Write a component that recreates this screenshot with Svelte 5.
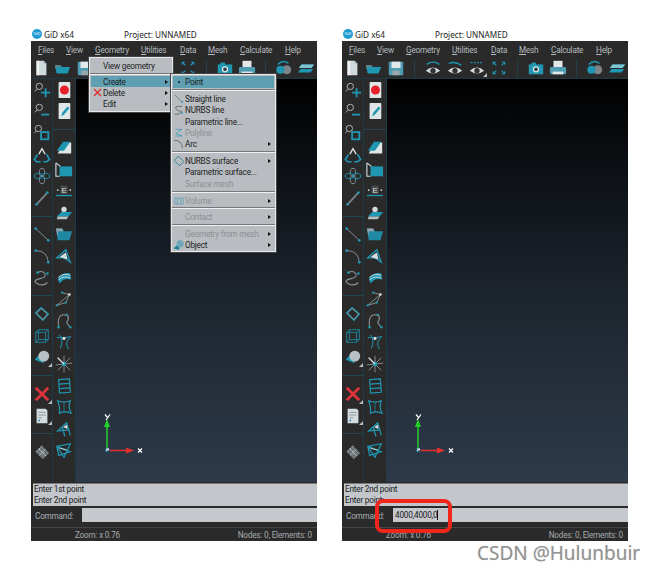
<script>
  const menus = ['Files', 'View', 'Geometry', 'Utilities', 'Data', 'Mesh', 'Calculate', 'Help'];

  const T = '#1f97b3';
  const G = '#8f989d';
  const W = '#d5dcdf';

  // inner svg for each icon, 20x20 box
  const icons = {
    doc: `<path d="M5 2h8l3 3v13H5z" fill="#cfdadd"/><path d="M5 2h3v16H5z" fill="#eef2f3"/><path d="M13 2l3 3h-3z" fill="#8fa5ab"/>`,
    folder: `<path d="M1 7h6l2 2h9l-3 7H3z" fill="${T}"/><path d="M1 7h6l1 2H3l-1 3z" fill="#6d8088"/>`,
    save: `<rect x="2" y="3" width="16" height="15" rx="1" fill="#4f9db2"/><rect x="5" y="3" width="10" height="7" fill="#e3e9eb"/><rect x="6" y="13" width="8" height="5" fill="#9aa8ad"/>`,
    eyeA: `<path d="M3 6Q10 1 17 6" fill="none" stroke="${T}" stroke-width="1.500"/><path d="M2 13Q10 6 18 13Q10 19 2 13z" fill="${W}"/><circle cx="10" cy="13" r="3" fill="#333"/>`,
    eyeB: `<path d="M3 5Q10 2 17 7" fill="none" stroke="${T}" stroke-width="1.500"/><path d="M2 13Q10 6 18 13Q10 19 2 13z" fill="${W}"/><circle cx="10" cy="13" r="3" fill="#333"/>`,
    eyeC: `<path d="M3 4h14" stroke="${T}" stroke-width="1.500" stroke-dasharray="2 1.500"/><path d="M2 13Q10 6 18 13Q10 19 2 13z" fill="${W}"/><circle cx="10" cy="13" r="3" fill="#333"/>`,
    fit: `<path d="M3 3h4L3 7zM17 3v4l-4-4zM3 17v-4l4 4zM17 17h-4l4-4z" fill="${T}"/><path d="M5 5l2 2M15 5l-2 2M5 15l2-2M15 15l-2-2" stroke="${T}" stroke-width="1.200"/>`,
    camera: `<rect x="2" y="6" width="16" height="11" fill="${T}"/><rect x="5" y="4" width="5" height="3" fill="${T}"/><circle cx="10" cy="11.500" r="3.500" fill="#dfe6e8"/><circle cx="10" cy="11.500" r="2" fill="#23424e"/>`,
    printer: `<rect x="5" y="2" width="10" height="8" fill="#e3e9eb"/><rect x="1" y="9" width="18" height="8" rx="1.500" fill="#4f9db2"/><rect x="4" y="14" width="12" height="3" fill="#dfe6e8"/>`,
    render: `<circle cx="13" cy="12" r="5" fill="#7d8489"/><circle cx="6" cy="12" r="4.500" fill="${T}"/><path d="M3 6Q9 0 15 5" fill="none" stroke="${T}" stroke-width="1.500"/>`,
    layers: `<path d="M5 6h14l-3 4H2zM4 11h14l-3 4H1z" fill="${T}"/><path d="M5 6h14l-3 4H2z" fill="#7fc4d3"/>`,
    zoomPlus: `<circle cx="7" cy="6" r="3.500" fill="none" stroke="#b9c1c5"/><path d="M4.500 9L2 11.500" stroke="#b9c1c5"/><path d="M14 8v10M9 13h10" stroke="${T}" stroke-width="2"/>`,
    zoomMinus: `<circle cx="7" cy="6" r="3.500" fill="none" stroke="#b9c1c5"/><path d="M4.500 9L2 11.500" stroke="#b9c1c5"/><path d="M9 14h9" stroke="${T}" stroke-width="2"/>`,
    zoomBox: `<circle cx="6" cy="5" r="3.500" fill="none" stroke="#b9c1c5"/><path d="M3.500 8L1.500 10" stroke="#b9c1c5"/><rect x="9" y="9" width="8" height="8" fill="none" stroke="${T}" stroke-width="2"/>`,
    recycle: `<path d="M6.500 9L10 3L13.500 9" fill="none" stroke="${W}" stroke-width="1.600"/><path d="M15 9L18.500 15L15 17.500H11.500" fill="none" stroke="${T}" stroke-width="1.800"/><path d="M8.500 17.500H4L1.500 15L5 9.500" fill="none" stroke="${T}" stroke-width="1.800"/>`,
    flower: `<g fill="none" stroke="${G}"><ellipse cx="10" cy="6" rx="3" ry="4.500"/><ellipse cx="10" cy="14" rx="3" ry="4.500"/></g><g fill="none" stroke="${T}"><ellipse cx="6" cy="10" rx="4.500" ry="3"/><ellipse cx="14" cy="10" rx="4.500" ry="3"/></g>`,
    segArrow: `<path d="M4 17L16 4" stroke="#7d8489" stroke-width="2"/><circle cx="4" cy="17" r="1.500" fill="${T}"/><circle cx="16" cy="4" r="1.500" fill="${T}"/>`,
    line: `<path d="M3 4L17 17" stroke="#8b9499"/><circle cx="3" cy="4" r="1.500" fill="${T}"/><circle cx="17" cy="17" r="1.500" fill="${T}"/>`,
    arc: `<path d="M3 4Q16 4 17 17" fill="none" stroke="#8b9499"/><circle cx="3" cy="4" r="1.500" fill="${T}"/><circle cx="17" cy="17" r="1.500" fill="${T}"/>`,
    curve: `<path d="M5 4Q10 1 13 5T7 11T6 17Q12 19 16 15" fill="none" stroke="#8b9499" stroke-width="1.200"/><circle cx="5" cy="4" r="1.500" fill="${T}"/><circle cx="16" cy="5" r="1.500" fill="${T}"/>`,
    quad: `<path d="M3 9L9 3L17 10L11 17z" fill="none" stroke="${T}" stroke-width="1.500"/><path d="M4 9L9 4L16 10L11 16z" fill="none" stroke="#8b9499"/>`,
    cube: `<path d="M3 6h11v11H3zM6 3h11v11H6zM3 6l3-3M14 6l3-3M14 17l3-3M3 17l3-3" fill="none" stroke="#1f7f98" stroke-width="1.100"/>`,
    sphere: `<path d="M2 13L10 3L12 17z" fill="${T}"/><circle cx="12" cy="9" r="6" fill="#b9c0c4"/>`,
    cross: `<path d="M3 3L17 17M17 3L3 17" stroke="#e0323a" stroke-width="3"/>`,
    sheet: `<path d="M4 2h10l2 2v14H4z" fill="#d5dcdf"/><path d="M6 6h8M6 9h8M6 12h4" stroke="#8c979c"/><circle cx="7" cy="15" r="1" fill="${T}"/>`,
    grid: `<path d="M10 3L18 11L11 18L3 10z" fill="#6f767a"/><path d="M6.500 6.500L14.500 14.500M10 3L3 10M13.500 7L7 14" stroke="#d5dadc" stroke-dasharray="2 1"/>`,
    record: `<rect x="4" y="1" width="13" height="18" rx="1" fill="#dfe6e8"/><circle cx="10.500" cy="10" r="5" fill="#e8202a"/>`,
    pencil: `<rect x="4" y="1" width="13" height="18" rx="1" fill="#dfe6e8"/><path d="M7 16l1-4 6-7 2 2-6 7z" fill="${T}"/>`,
    note: `<path d="M3 16L10 4H18V16z" fill="#dfe6e8"/><path d="M2 13L9 3H17L10 13z" fill="${T}"/>`,
    box: `<rect x="5" y="6" width="14" height="11" fill="${T}"/><path d="M1 2L6 6M1 2v15h4" fill="none" stroke="#d9e1e4" stroke-width="1.200"/>`,
    edge: `<path d="M1 15h18" stroke="${T}" stroke-width="1.500"/><circle cx="3" cy="9" r="1" fill="${W}"/><circle cx="17" cy="9" r="1" fill="${W}"/><rect x="6" y="4" width="8" height="9" fill="#4a4a4a"/><text x="10" y="12" text-anchor="middle" font-size="9" font-family="Liberation Sans" fill="${W}">E</text>`,
    plane: `<path d="M7 9h12l-4 5H2z" fill="${T}"/><path d="M3 14h12l-2 3H2z" fill="#b7bfc3"/><circle cx="10" cy="6" r="3" fill="#d5dadc"/>`,
    folder2: `<path d="M1 4h7l2 3h9l-3 10H3z" fill="#1f89a3"/><path d="M1 4h7l1 3H3v6z" fill="#9aa3a8"/>`,
    pick: `<path d="M2 12L12 3L17 17L10 12z" fill="none" stroke="${T}" stroke-width="1.500"/><path d="M5 11L12 6L14 14z" fill="${W}"/>`,
    wave: `<path d="M3 10Q10 3 17 5L18 12Q11 9 5 16z" fill="${T}"/><path d="M4 9Q10 4 17 7M4 12Q10 7 17 10" stroke="${W}" fill="none"/>`,
    zig: `<path d="M2 17L16 5L8 3M2 17L12 14L16 5" fill="none" stroke="#8b9499"/><circle cx="2" cy="17" r="1.300" fill="${T}"/><circle cx="16" cy="5" r="1.500" fill="${W}"/><circle cx="8" cy="3" r="1.300" fill="${T}"/><circle cx="12" cy="14" r="1.300" fill="${T}"/>`,
    hook: `<path d="M4 17Q2 3 10 3T13 12L17 17" fill="none" stroke="#8b9499" stroke-width="1.200"/><circle cx="4" cy="17" r="1.400" fill="${T}"/><circle cx="17" cy="17" r="1.400" fill="${T}"/><circle cx="13" cy="3" r="1.200" fill="${T}"/>`,
    cross2: `<path d="M5 2Q10 8 6 17M15 18Q10 10 17 5M2 5Q10 6 18 4" fill="none" stroke="${T}" stroke-width="1.100"/><circle cx="10" cy="6" r="1.800" fill="${W}"/>`,
    star: `<path d="M3 3L17 17M17 3L3 17M10 1V19M1 11L19 9" stroke="#8b9499"/><circle cx="10" cy="10" r="2.500" fill="${T}"/><path d="M3 3L10 10" stroke="${W}" stroke-width="1.500"/>`,
    mesh1: `<path d="M4 3L16 2L17 17L5 18zM4.500 8L16.500 7M4.800 13L16.800 12" fill="none" stroke="${T}" stroke-width="1.300"/>`,
    mesh2: `<path d="M3 3Q10 6 17 3Q14 10 18 17Q10 14 5 17Q6 10 3 3z" fill="none" stroke="${T}" stroke-width="1.300"/><path d="M10 5V15" stroke="${T}" stroke-width=".8"/>`,
    tri: `<path d="M2 13L13 3L17 17M8 8L11 18M4 12L16 11" fill="none" stroke="${T}" stroke-width="1.400"/><path d="M9 8L13 5L14 10z" fill="${W}"/>`,
    tri2: `<path d="M2 6L17 3L10 18zM2 6L17 12L4 16z" fill="none" stroke="${T}" stroke-width="1.300"/><path d="M5 8L13 10" stroke="${W}"/>`,
    line16: `<path d="M3 3L15 15" stroke="#7d8489" stroke-width="1.500"/><circle cx="15" cy="15" r="1.500" fill="${T}"/>`,
    nurbs: `<path d="M15 4H7Q3 4 5 8T13 12T8 17H3" fill="none" stroke="#666" stroke-width="1.500"/><circle cx="15" cy="15" r="1.500" fill="${T}"/>`,
    poly: `<path d="M4 4H15L5 11L15 15H4" fill="none" stroke="${T}" stroke-width="1.500" opacity=".7"/>`,
    arcMenu: `<path d="M2 4Q14 3 16 17" fill="none" stroke="#666" stroke-width="1.500"/>`,
    surf: `<path d="M2 9L9 2L18 11L11 18z" fill="none" stroke="#1f7f98" stroke-width="1.500"/>`,
    vol: `<path d="M3 5h14v10H3zM7 5v10M13 5v10" fill="none" stroke="#4f9db2" stroke-width="1.500" opacity=".8"/>`,
    obj: `<path d="M1 16L9 8L11 18z" fill="#1f7f98"/><circle cx="12" cy="8" r="6" fill="#6fa6b8"/>`
  };

  const topGroups = [
    ['doc', 'folder', 'save'],
    ['eyeA', 'eyeB', 'eyeC', 'fit'],
    ['camera', 'printer'],
    ['render', 'layers']
  ];

  const leftGroups = [
    ['zoomPlus', 'zoomMinus', 'zoomBox', 'recycle', 'flower', 'segArrow'],
    ['line', 'arc', 'curve'],
    ['quad', 'cube', 'sphere'],
    ['cross', 'sheet'],
    ['grid']
  ];

  const rightGroups = [
    ['record', 'pencil'],
    ['note', 'box', 'edge', 'plane', 'folder2', 'pick', 'wave', 'zig', 'hook', 'cross2', 'star', 'mesh1', 'mesh2', 'tri', 'tri2']
  ];

  const withCorner = ['eyeC', 'sphere', 'cross', 'sheet'];

  const createMenu = [
    [{ label: 'Point', selected: true }],
    [
      { label: 'Straight line', icon: 'line16' },
      { label: 'NURBS line', icon: 'nurbs' },
      { label: 'Parametric line...' },
      { label: 'Polyline', icon: 'poly', off: true },
      { label: 'Arc', icon: 'arcMenu', sub: true }
    ],
    [
      { label: 'NURBS surface', icon: 'surf', sub: true },
      { label: 'Parametric surface...' },
      { label: 'Surface mesh', off: true }
    ],
    [{ label: 'Volume', icon: 'vol', off: true, sub: true }],
    [{ label: 'Contact', off: true, sub: true }],
    [
      { label: 'Geometry from mesh', off: true, sub: true },
      { label: 'Object', icon: 'obj', sub: true }
    ]
  ];
</script>

{#snippet icon(name, size)}
  <svg class="ico" width={size} height={size} viewBox="0 0 20 20">{@html icons[name]}</svg>
{/snippet}

{#snippet toolCol(groups)}
  <div class="col">
    {#each groups as group, i}
      {#if i > 0}<div class="col-sep"></div>{/if}
      {#each group as name}
        <div class="cell">
          {@render icon(name, 18)}
          {#if withCorner.includes(name)}<span class="corner"></span>{/if}
        </div>
      {/each}
    {/each}
  </div>
{/snippet}

{#snippet gidWindow(messages, command, open)}
  <div class="app-col">
    <div class="title">
      <span class="logo">GiD</span>
      <span class="app-name">GiD x64</span>
      <span class="project">Project: UNNAMED</span>
    </div>
    <div class="gid">
      <div class="menubar">
        {#each menus as m}
          <span class="menu-item"><u>{m[0]}</u>{m.slice(1)}</span>
        {/each}
      </div>
      <div class="toolbar">
        {#each topGroups as group, i}
          {#if i > 0}<div class="bar-sep"></div>{/if}
          <div class="bar-group">
            {#each group as name}
              <div class="bar-btn">
                {@render icon(name, 18)}
                {#if withCorner.includes(name)}<span class="corner"></span>{/if}
              </div>
            {/each}
          </div>
        {/each}
      </div>
      <div class="body">
        {@render toolCol(leftGroups)}
        {@render toolCol(rightGroups)}
        <div class="viewport">
          <svg class="axes" width="50" height="50" viewBox="0 0 50 50">
            <path d="M6 36V11" stroke="#22d02c" stroke-width="1.500"/>
            <path d="M6 5l3 8H3z" fill="#22d02c"/>
            <path d="M6 36.500H26" stroke="#e8302c" stroke-width="1.500"/>
            <path d="M33 36.500l-8 3v-6z" fill="#e8302c"/>
            <circle cx="6" cy="36" r="2.500" fill="#1d5a70"/>
            <path d="M5 37l3-2M5 35h3" stroke="#fff"/>
            <path d="M37 34.500l4 4M41 34.500l-4 4" stroke="#fff" stroke-width="1.200"/>
            <path d="M4 0.500l2.500 3M9 0.500L5 6" stroke="#fff" stroke-width="1.200" fill="none"/>
          </svg>
        </div>
      </div>
      <div class="messages">
        {#each messages as line}
          <div>{line}</div>
        {/each}
      </div>
      <div class="command">
        <span class="cmd-label">Command:</span>
        <div class="cmd-input">{#if command}{command}<span class="caret"></span>{/if}</div>
      </div>
      <div class="status">
        <span class="zoom">Zoom: x 0.76</span>
        <span>Nodes: 0, Elements: 0</span>
      </div>

      {#if open}
        <div class="popup geo">
          <div class="row"><span class="row-label">View geometry</span></div>
          <div class="pop-sep"></div>
          <div class="row selected"><span class="row-label">Create</span><span class="arrow"></span></div>
          <div class="row">
            <svg class="row-x" width="9" height="9" viewBox="0 0 9 9"><path d="M1 1l7 7M8 1L1 8" stroke="#e02a2a" stroke-width="1.300"/></svg>
            <span class="row-label">Delete</span><span class="arrow"></span>
          </div>
          <div class="row"><span class="row-label">Edit</span><span class="arrow"></span></div>
        </div>
        <div class="popup create">
          {#each createMenu as group, i}
            {#if i > 0}<div class="pop-sep"></div>{/if}
            {#each group as item}
              <div class="row" class:selected={item.selected} class:off={item.off}>
                <span class="row-ico">
                  {#if item.icon}{@render icon(item.icon, 12)}{/if}
                  {#if item.selected}<i class="dot"></i>{/if}
                </span>
                <span class="row-label">{item.label}</span>
                {#if item.sub}<span class="arrow"></span>{/if}
              </div>
            {/each}
          {/each}
        </div>
      {/if}
    </div>
  </div>
{/snippet}

<div class="page">
  {@render gidWindow(['Enter 1st point', 'Enter 2nd point'], '', true)}
  {@render gidWindow(['Enter 2nd point', 'Enter point:'], '4000,4000,0', false)}
  <div class="callout"></div>
  <div class="watermark">CSDN @Hulunbuir</div>
</div>

<style>
  :global(body) { background: #fff; }
  .page {
    position: relative;
    width: 657px;
    height: 570px;
    display: flex;
    gap: 25px;
    padding: 27px 0 0 31px;
    box-sizing: border-box;
    overflow: hidden;
    font-family: "Noto Sans", "Liberation Sans", sans-serif;
  }
  .app-col { width: 286px; }
  .title {
    height: 14px;
    display: flex;
    align-items: center;
    font-size: 8.2px;
    color: #222;
  }
  .logo {
    width: 10px;
    height: 10px;
    border-radius: 50%;
    background: #1f9bd1;
    color: #fff;
    font-size: 4px;
    line-height: 10px;
    text-align: center;
    margin-left: 1px;
  }
  .app-name { margin-left: 2px; width: 80px; }
  .gid {
    position: relative;
    height: 500px;
    background: #2a2a2a;
    display: flex;
    flex-direction: column;
    color: #bfc4c8;
    font-family: "Roboto", "Liberation Sans", sans-serif;
    font-size: 8.2px;
    letter-spacing: -0.2px;
  }
  .menubar {
    height: 17px;
    display: flex;
    align-items: center;
    flex-shrink: 0;
  }
  .menu-item { position: absolute; color: #b4babd; }
  .menu-item:nth-child(1) { left: 7px; }
  .menu-item:nth-child(2) { left: 35px; }
  .menu-item:nth-child(3) { left: 64px; }
  .menu-item:nth-child(4) { left: 110px; }
  .menu-item:nth-child(5) { left: 149px; }
  .menu-item:nth-child(6) { left: 177px; }
  .menu-item:nth-child(7) { left: 209px; }
  .menu-item:nth-child(8) { left: 254px; }
  .toolbar {
    height: 20px;
    display: flex;
    align-items: center;
    flex-shrink: 0;
  }
  .bar-group { display: flex; gap: 2px; }
  .bar-btn {
    position: relative;
    width: 20px;
    height: 20px;
    display: flex;
    align-items: center;
    justify-content: center;
  }
  .bar-sep {
    width: 1px;
    height: 19px;
    background: #1f3f4a;
    margin: 0 8px;
  }
  .body {
    flex: 1;
    min-height: 0;
    display: flex;
    border-top: 1px solid #1f3a44;
  }
  .col {
    width: 21px;
    flex-shrink: 0;
    border-right: 1px solid #1b3c48;
    display: flex;
    flex-direction: column;
  }
  .col:nth-child(2) { width: 22px; }
  .cell {
    position: relative;
    height: 21.6px;
    flex-shrink: 0;
    display: flex;
    align-items: center;
    justify-content: center;
  }
  .ico { display: block; flex-shrink: 0; }
  .corner {
    position: absolute;
    right: 0;
    bottom: 1px;
    border-style: solid;
    border-width: 0 0 4px 4px;
    border-color: transparent transparent #b8bec2 transparent;
  }
  .col-sep {
    height: 1px;
    flex-shrink: 0;
    margin: 7px 0 7px;
    background: #1f4552;
  }
  .viewport {
    position: relative;
    flex: 1;
    background: linear-gradient(180deg, #000 0%, #0e1217 25%, #1d252e 55%, #2e3a4a 100%);
  }
  .axes { position: absolute; left: 25px; bottom: 18px; }
  .messages {
    height: 22px;
    margin: 1px 0 0 2px;
    padding-left: 1px;
    background: #c3c6ca;
    border-top: 1px solid #777;
    color: #1a1a1a;
    line-height: 10.5px;
    flex-shrink: 0;
  }
  .command {
    height: 20px;
    display: flex;
    align-items: center;
    flex-shrink: 0;
  }
  .cmd-label { width: 51px; padding-left: 4px; box-sizing: border-box; color: #a9afb3; }
  .cmd-input {
    flex: 1;
    height: 14px;
    background: #c5c8cc;
    color: #1a1a1a;
    line-height: 14px;
    padding-left: 2px;
    display: flex;
    align-items: center;
    margin-bottom: 2px;
  }
  .caret { width: 1px; height: 10px; background: #111; }
  .status {
    height: 14px;
    margin-top: 1px;
    display: flex;
    align-items: center;
    justify-content: space-between;
    padding: 0 5px 0 44px;
    border-top: 1px solid #444;
    color: #a5abaf;
    flex-shrink: 0;
    box-sizing: border-box;
  }
  .popup {
    position: absolute;
    background: #b9bdc1;
    border: 1px solid #e6e8ea;
    box-shadow: 0 0 0 1px #444;
    color: #1c1c1c;
    display: flex;
    flex-direction: column;
    padding: 1px;
    box-sizing: border-box;
  }
  .geo { left: 58px; top: 16px; width: 84px; height: 55px; }
  .create { left: 140px; top: 33px; width: 105px; height: 178px; }
  .row {
    position: relative;
    height: 11.3px;
    display: flex;
    align-items: center;
    flex-shrink: 0;
  }
  .geo .row { padding-left: 12px; }
  .geo .row:first-child { height: 13px; }
  .row-x { position: absolute; left: 2px; top: 1px; }
  .selected { background: #5e9fb1; }
  .create .selected { height: 12px; }
  .row-ico {
    width: 11px;
    margin-right: 1px;
    display: flex;
    align-items: center;
    justify-content: center;
    flex-shrink: 0;
  }
  .dot { width: 2px; height: 2px; background: #234; }
  .off { color: #8b8f93; }
  .arrow {
    margin-left: auto;
    margin-right: 3px;
    border-style: solid;
    border-width: 2.5px 0 2.5px 3px;
    border-color: transparent transparent transparent #111;
  }
  .pop-sep {
    height: 1px;
    margin: 2.25px -1px;
    background: #eef0f1;
    box-shadow: 0 -1px 0 #777;
    flex-shrink: 0;
  }
  .geo .pop-sep { margin: 1.5px -1px; }
  .callout {
    position: absolute;
    left: 375px;
    top: 499px;
    width: 77px;
    height: 34px;
    box-sizing: border-box;
    border: 4px solid #f0261c;
    border-radius: 8px;
  }
  .watermark {
    position: absolute;
    left: 477px;
    top: 540px;
    font-size: 19px;
    color: #939393;
    white-space: nowrap;
    text-shadow: 0 0 1px #ccc;
  }
</style>
